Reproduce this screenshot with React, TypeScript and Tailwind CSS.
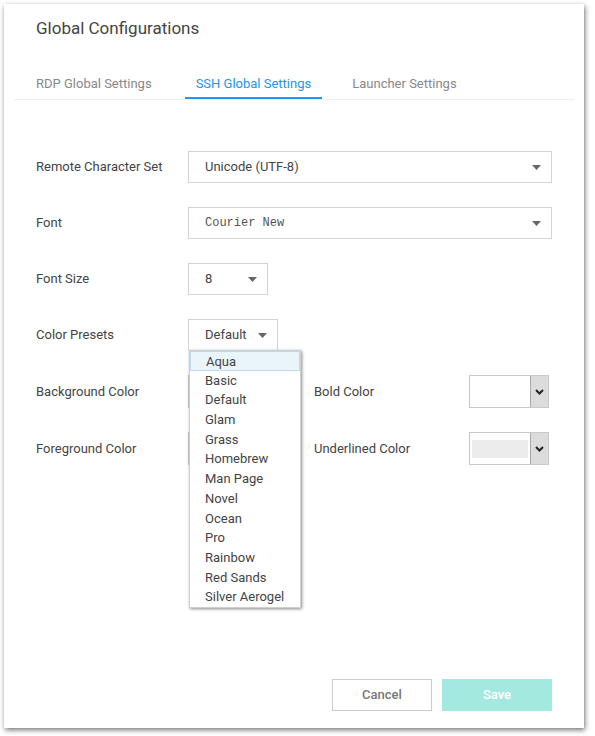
import React from "react";

const presets = [
  "Aqua",
  "Basic",
  "Default",
  "Glam",
  "Grass",
  "Homebrew",
  "Man Page",
  "Novel",
  "Ocean",
  "Pro",
  "Rainbow",
  "Red Sands",
  "Silver Aerogel",
];

const Caret = () => (
  <svg width="9" height="5" viewBox="0 0 9 5" className="shrink-0">
    <path d="M0 0 L9 0 L4.5 5 Z" fill="#666" />
  </svg>
);

const Chevron = () => (
  <svg width="9" height="6" viewBox="0 0 9 6">
    <path d="M1 1 L4.5 4.5 L8 1" stroke="#222" strokeWidth="2" fill="none" />
  </svg>
);

const Select = ({
  value,
  className,
  mono,
}: {
  value: string;
  className: string;
  mono?: boolean;
}) => (
  <div
    className={`h-[32px] border border-[#d4d4d4] bg-white flex items-center justify-between pl-4 pr-[10px] ${className}`}
  >
    <span
      className={
        mono
          ? "text-[12px] text-[#555] font-['Liberation_Mono',monospace]"
          : "text-[13px] text-[#444]"
      }
    >
      {value}
    </span>
    <Caret />
  </div>
);

const ColorPicker = ({ swatch }: { swatch?: boolean }) => (
  <div className="h-[33px] w-[80px] border border-[#c8c8c8] bg-white flex">
    <div className="flex-1 flex items-center px-[2px]">
      {swatch && <div className="h-[18px] w-full bg-[#ececec]" />}
    </div>
    <div className="w-[18px] bg-[#dcdcdc] border-l border-[#a8a8a8] flex items-center justify-center">
      <Chevron />
    </div>
  </div>
);

const Label = ({ children, w }: { children: React.ReactNode; w: string }) => (
  <div className={`${w} text-[13px] text-[#444] shrink-0`}>{children}</div>
);

export default function App() {
  return (
    <div className="w-[595px] h-[736px] bg-white p-[4px] font-['Roboto','Liberation_Sans',sans-serif]">
      <div className="w-[580px] h-[724px] bg-white shadow-[1px_2px_5px_rgba(0,0,0,0.55)] flex flex-col">
        <div className="px-[32px] pt-[12px] text-[17px] text-[#444]">
          Global Configurations
        </div>

        <div className="mx-[10px] mt-[32px] border-b border-[#eeeeee] flex pl-[22px] text-[13px]">
          <div className="pb-[6px] text-[#888] pr-[33px]">RDP Global Settings</div>
          <div className="pb-[4px] px-[11px] text-[#2196f3] border-b-2 border-[#2196f3]">
            SSH Global Settings
          </div>
          <div className="pb-[6px] text-[#888] pl-[30px]">Launcher Settings</div>
        </div>

        <div className="px-[32px] pt-[51px] flex flex-col gap-[24px]">
          <div className="flex items-center">
            <Label w="w-[152px]">Remote Character Set</Label>
            <Select value="Unicode (UTF-8)" className="w-[364px]" />
          </div>
          <div className="flex items-center">
            <Label w="w-[152px]">Font</Label>
            <Select value="Courier New" className="w-[364px]" mono />
          </div>
          <div className="flex items-center">
            <Label w="w-[152px]">Font Size</Label>
            <Select value="8" className="w-[80px]" />
          </div>
          <div className="flex items-center">
            <Label w="w-[152px]">Color Presets</Label>
            <div className="relative">
              <Select value="Default" className="w-[90px]" />
              <div className="absolute left-[1px] top-[31px] w-[112px] z-10 bg-white border border-[#cfcfcf] shadow-[1px_1px_3px_rgba(0,0,0,0.45)] text-[13px] text-[#444]">
                {presets.map((p, i) => (
                  <div
                    key={p}
                    className={`h-[19.7px] leading-[19px] pl-[15px] ${
                      i === 0 ? "bg-[#eaf5fb] border border-[#b9dcef] pl-[14px]" : ""
                    }`}
                  >
                    {p}
                  </div>
                ))}
              </div>
            </div>
          </div>
          <div className="flex items-center">
            <Label w="w-[152px]">Background Color</Label>
            <div className="w-[126px]">
              <ColorPicker />
            </div>
            <Label w="w-[155px]">Bold Color</Label>
            <ColorPicker />
          </div>
          <div className="flex items-center">
            <Label w="w-[152px]">Foreground Color</Label>
            <div className="w-[126px]">
              <ColorPicker />
            </div>
            <Label w="w-[155px]">Underlined Color</Label>
            <ColorPicker swatch />
          </div>
        </div>

        <div className="mt-auto mb-[17px] px-[32px] flex justify-end gap-[10px]">
          <button className="w-[100px] h-[32px] border border-[#c8ccd0] bg-white text-[13px] text-[#777] font-medium">
            Cancel
          </button>
          <button className="w-[110px] h-[32px] bg-[#a3e9df] text-[13px] text-white font-medium">
            Save
          </button>
        </div>
      </div>
    </div>
  );
}
